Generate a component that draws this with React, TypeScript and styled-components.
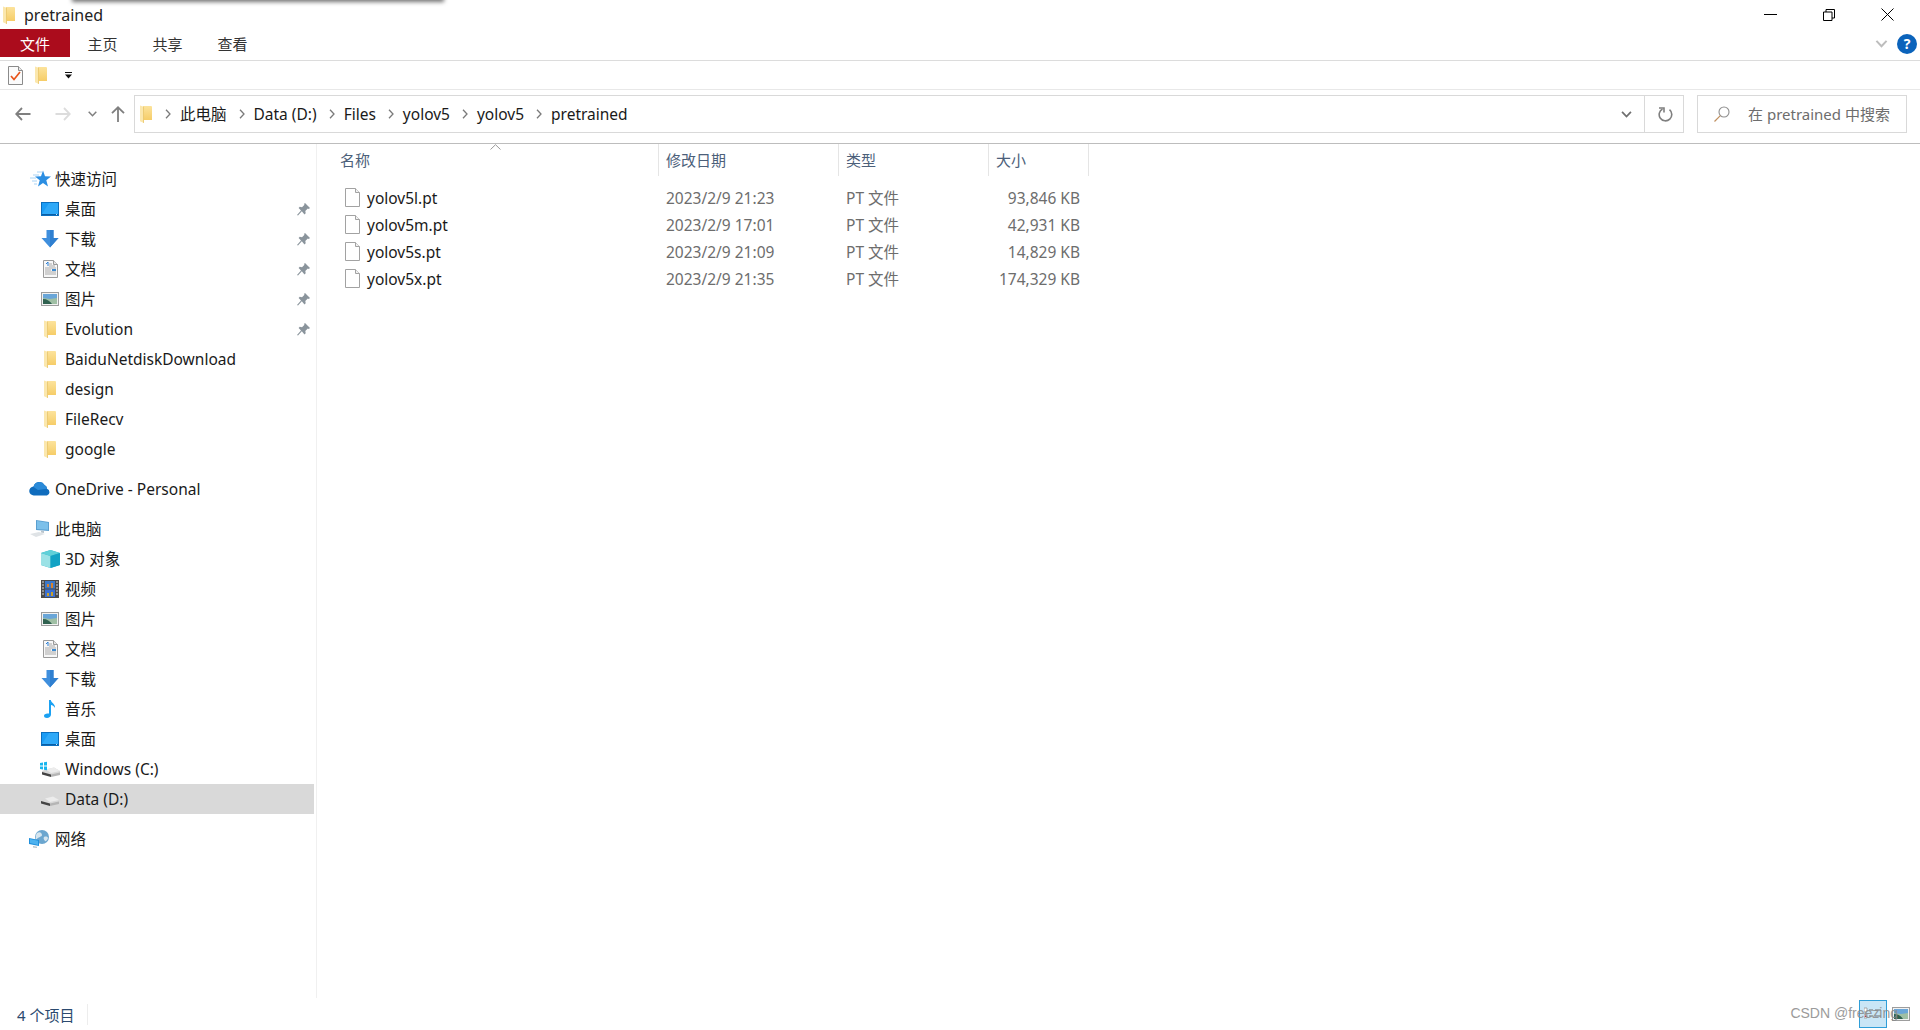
import styled, { createGlobalStyle, css } from "styled-components";

const GlobalStyle = createGlobalStyle`
  html, body {
    margin: 0;
    padding: 0;
    background: #fff;
  }
  * {
    box-sizing: border-box;
  }
`;

const FolderIcon = () => (
  <svg width="12" height="18" viewBox="0 0 12 18">
    <defs>
      <linearGradient id="folderBody" x1="0" y1="0" x2="0" y2="1">
        <stop offset="0" stopColor="#fce39c" />
        <stop offset="1" stopColor="#f6cd68" />
      </linearGradient>
    </defs>
    <path d="M3 1h8.500l.5.5V15H3z" fill="url(#folderBody)" />
    <path d="M0 .500l3.800 1.300V18L0 16.300z" fill="#fbe7ad" />
    <path d="M3.800 1.800V18L3 17.700V1.500z" fill="#e9c468" />
  </svg>
);

const DesktopIcon = () => (
  <svg width="18" height="14" viewBox="0 0 18 14">
    <rect x="0" y="0" width="18" height="14" fill="#0b6fbf" />
    <rect x="1" y="1" width="16" height="11" fill="#1a9cf5" />
    <path d="M1 12L8 1h9v11z" fill="#2fa9f8" />
    <rect x="1" y="12" width="16" height="1" fill="#0a5da3" />
    <rect x="15" y="12" width="1" height="1" fill="#cfe9fb" />
  </svg>
);

const DownloadIcon = () => (
  <svg width="18" height="18" viewBox="0 0 18 18">
    <path d="M5.500 0h7v8H17.500L9 17.500.5 8h5z" fill="#3f8fdd" />
    <path d="M9 0h3.500v8H17.500L9 17.500z" fill="#2f7fd0" />
  </svg>
);

const DocIcon = () => (
  <svg width="15" height="18" viewBox="0 0 15 18">
    <path d="M.5.500h10l4 4v13H.5z" fill="#f7f7f7" stroke="#9a9a9a" />
    <path d="M10.500.500v4h4" fill="#e4e4e4" stroke="#9a9a9a" />
    <path d="M3 4l2-2v4" stroke="#2a7fd5" fill="none" />
    <path d="M6 4h3M6 6h6M2 8h11M2 10h6M2 12h11M2 14h11" stroke="#a9a9a9" />
    <rect x="9" y="9" width="4" height="2" fill="#3d8bd0" />
  </svg>
);

const PictureIcon = () => (
  <svg width="18" height="14" viewBox="0 0 18 14">
    <rect x="0.500" y="0.500" width="17" height="13" fill="#f2f2f2" stroke="#9d9d9d" />
    <rect x="2" y="2" width="14" height="5" fill="#6aa6d8" />
    <path d="M2 6l7 1 7-1v6H2z" fill="#9fbfa4" />
    <path d="M2 7c4 0 7 2 9 5H2z" fill="#2f6150" />
  </svg>
);

const StarIcon = () => (
  <svg width="22" height="18" viewBox="0 0 22 18">
    <path d="M14 .5l2 5.800 6 .2-4.700 3.800L19 16.500l-5-3.500-5 3.500 1.700-6.200L6 6.500l6-.2z" fill="#2b8ee2" />
    <path d="M8 2h5M4 5h6M1 8h6M3 11h5M5 14h3" stroke="#a8d3f5" strokeWidth="1" />
  </svg>
);

const CloudIcon = () => (
  <svg width="22" height="14" viewBox="0 0 22 14">
    <path d="M5 13.500a4.500 4.500 0 0 1-.5-9A6 6 0 0 1 15.500 3 4 4 0 0 1 18 6.800 3.500 3.500 0 0 1 18 13.500z" fill="#0f6cbd" />
    <path d="M4.500 5A6 6 0 0 1 15.500 3 4 4 0 0 1 18 6.800L9 8z" fill="#2a8ad8" />
  </svg>
);

const ComputerIcon = () => (
  <svg width="22" height="18" viewBox="0 0 22 18">
    <path d="M7 0l13 2v9L7 10z" fill="#5a9fd0" />
    <path d="M8 1l11 1.700v7L8 9z" fill="#7cc0ea" />
    <path d="M12 10.500l3 .5v2l-3-.5z" fill="#b9c4cc" />
    <path d="M1 14l9-2 6 2-9 3z" fill="#dfe3e6" />
  </svg>
);

const CubeIcon = () => (
  <svg width="19" height="18" viewBox="0 0 19 18">
    <path d="M9.500 0L19 3v12l-9.500 3L0 15V3z" fill="#2fb3c6" />
    <path d="M0 3l9.500 3v12L0 15z" fill="#9be2e6" />
    <path d="M9.500 0L19 3 9.500 6 0 3z" fill="#5fd0d8" />
    <path d="M9.500 6L19 3v12l-9.500 3z" fill="#12a2c4" />
  </svg>
);

const VideoIcon = () => (
  <svg width="18" height="18" viewBox="0 0 18 18">
    <rect width="18" height="18" fill="#4a4a4a" />
    <rect x="4" y="1" width="10" height="7.500" fill="#3b78c9" />
    <rect x="4" y="9.500" width="10" height="7.500" fill="#3b6fd0" />
    <path d="M6 7V4h2v3zM10 8V3h2v5z" fill="#d9822b" />
    <path d="M6 16v-3h2v3zM10 16v-4h2v4z" fill="#c8a02b" />
    <path d="M1 2h2M1 5h2M1 8h2M1 11h2M1 14h2M15 2h2M15 5h2M15 8h2M15 11h2M15 14h2" stroke="#d8d8d8" />
  </svg>
);

const MusicIcon = () => (
  <svg width="14" height="18" viewBox="0 0 14 18">
    <path d="M6 0h1.800c.4 3 4.700 3.800 4.200 8-.9-1.800-2.400-2.700-4-3v9.500c0 2-2 3.500-4 3.500-1.800 0-3-1-3-2.300C1 14 3.500 13 6 13.600z" fill="#1ba1f2" />
  </svg>
);

const DriveBody = () => (
  <>
    <path d="M4 7.500l8-2 6 3.500v3l-9 2-9-2.500V9z" fill="#d8d8d8" />
    <path d="M0 10l9 2.500V15l-9-2.500z" fill="#444" />
    <path d="M9 12.500l9-2V13l-9 2z" fill="#b5b5b5" />
    <path d="M4 7.500l8-2 6 3.500-9 2z" fill="#ececec" />
  </>
);

const WinDriveIcon = () => (
  <svg width="20" height="16" viewBox="0 0 20 16">
    <g transform="translate(2 1)">
      <DriveBody />
    </g>
    <path d="M0 2l3-.5v3H0zM4 1.300l3-.5v3.700H4zM0 5.500h3v3l-3-.5zM4 5.500h3v3.700l-3-.5z" fill="#19b5ee" />
  </svg>
);

const DataDriveIcon = () => (
  <svg width="20" height="16" viewBox="0 0 20 16">
    <g transform="translate(1 0)">
      <DriveBody />
    </g>
  </svg>
);

const NetworkIcon = () => (
  <svg width="22" height="19" viewBox="0 0 22 19">
    <circle cx="13" cy="7" r="7" fill="#6ba6cf" />
    <path d="M8 3c3-2 5 0 5 2s-4 2-5 4-2-3 0-6zM15 7c2-1 4 0 4 1s-2 4-3 3-2-3-1-4z" fill="#d5e5ef" />
    <path d="M0 8l10 2v6L0 14z" fill="#1f8fdc" />
    <path d="M1 9l8 1.700v4.200L1 13z" fill="#4db2ef" />
    <path d="M4 16l4 .8v1.200l-4-.5z" fill="#b8c3ca" />
  </svg>
);

const PinIcon = () => (
  <svg width="13" height="13" viewBox="0 0 13 13">
    <path d="M8 0l5 5-1.200 1-1-.4L8.300 8l.4 2.200L7.500 11.400 4.800 8.200 1 12.500 0 12l4-4.500L1.600 5l1.200-1.200 2.200.4 2.500-2.400L7 1z" fill="#8a949c" />
  </svg>
);

const FileIcon = () => (
  <svg width="15" height="19" viewBox="0 0 15 19">
    <path d="M.5.500h10l4 4v14H.5z" fill="#fff" stroke="#a2a2a2" />
    <path d="M10.500.500v4h4" fill="#f1f1f1" stroke="#a2a2a2" />
  </svg>
);

const TaskIcon = () => (
  <svg width="15" height="19" viewBox="0 0 15 19">
    <path d="M.5.500h10l4 4v14H.5z" fill="#fbfbfb" stroke="#8b8b8b" />
    <path d="M10.500.500v4h4" fill="#e8e8e8" stroke="#8b8b8b" />
    <path d="M3 10l3 3.500L12 6" fill="none" stroke="#e8541a" strokeWidth="1.700" />
  </svg>
);

const BackIcon = ({ color }: { color: string }) => (
  <svg width="16" height="14" viewBox="0 0 16 14">
    <path d="M15.500 7H1.500M7 1L1.200 7 7 13" fill="none" stroke={color} strokeWidth="1.800" />
  </svg>
);

const ForwardIcon = ({ color }: { color: string }) => (
  <svg width="16" height="14" viewBox="0 0 16 14">
    <path d="M.5 7h14M9 1l5.800 6L9 13" fill="none" stroke={color} strokeWidth="1.800" />
  </svg>
);

const UpIcon = () => (
  <svg width="14" height="16" viewBox="0 0 14 16">
    <path d="M7 16V1.500M1 7.200L7 1.300l6 5.900" fill="none" stroke="#7f7f7f" strokeWidth="1.800" />
  </svg>
);

const SmallChevron = ({ color = "#7f7f7f", w = 9, h = 6 }: { color?: string; w?: number; h?: number }) => (
  <svg width={w} height={h} viewBox="0 0 9 6">
    <path d="M.7.700L4.500 4.700 8.300.7" fill="none" stroke={color} strokeWidth="1.500" />
  </svg>
);

const CrumbChevron = () => (
  <svg width="6" height="10" viewBox="0 0 6 10">
    <path d="M1 .8L5 5 1 9.200" fill="none" stroke="#7a7a7a" strokeWidth="1.300" />
  </svg>
);

const RefreshIcon = () => (
  <svg width="15" height="15" viewBox="0 0 15 15">
    <path d="M4.500 2A6.300 6.300 0 1 0 11.500 2.700" fill="none" stroke="#7f7f7f" strokeWidth="1.600" />
    <path d="M1 1h5v4.500" fill="none" stroke="#7f7f7f" strokeWidth="1.600" />
  </svg>
);

const SearchIcon = () => (
  <svg width="16" height="16" viewBox="0 0 16 16">
    <circle cx="10" cy="6" r="5" fill="none" stroke="#8f8f8f" strokeWidth="1.100" />
    <path d="M6.300 9.700L.5 15.500" stroke="#c09060" strokeWidth="1.200" />
  </svg>
);

const DetailsViewIcon = () => (
  <svg width="18" height="20" viewBox="0 0 18 20">
    <path d="M0 4h3v4H0zM0 10h3v4H0z" fill="#fff" stroke="#8a8a8a" strokeWidth="0.700" />
    <rect x="0.800" y="11.500" width="1.500" height="1.500" fill="#b01818" />
    <path d="M5 6h4M11 6h6M5 12h4M11 12h6" stroke="#6f6f6f" />
  </svg>
);

const iconFor = {
  star: <StarIcon />,
  desktop: <DesktopIcon />,
  download: <DownloadIcon />,
  doc: <DocIcon />,
  picture: <PictureIcon />,
  folder: <FolderIcon />,
  cloud: <CloudIcon />,
  computer: <ComputerIcon />,
  cube: <CubeIcon />,
  video: <VideoIcon />,
  music: <MusicIcon />,
  win: <WinDriveIcon />,
  drive: <DataDriveIcon />,
  network: <NetworkIcon />,
};

type NavItem = {
  label: string;
  icon: keyof typeof iconFor;
  top?: boolean;
  pinned?: boolean;
  selected?: boolean;
};

const navGroups: NavItem[][] = [
  [
    { label: "快速访问", icon: "star", top: true },
    { label: "桌面", icon: "desktop", pinned: true },
    { label: "下载", icon: "download", pinned: true },
    { label: "文档", icon: "doc", pinned: true },
    { label: "图片", icon: "picture", pinned: true },
    { label: "Evolution", icon: "folder", pinned: true },
    { label: "BaiduNetdiskDownload", icon: "folder" },
    { label: "design", icon: "folder" },
    { label: "FileRecv", icon: "folder" },
    { label: "google", icon: "folder" },
  ],
  [{ label: "OneDrive - Personal", icon: "cloud", top: true }],
  [
    { label: "此电脑", icon: "computer", top: true },
    { label: "3D 对象", icon: "cube" },
    { label: "视频", icon: "video" },
    { label: "图片", icon: "picture" },
    { label: "文档", icon: "doc" },
    { label: "下载", icon: "download" },
    { label: "音乐", icon: "music" },
    { label: "桌面", icon: "desktop" },
    { label: "Windows (C:)", icon: "win" },
    { label: "Data (D:)", icon: "drive", selected: true },
  ],
  [{ label: "网络", icon: "network", top: true }],
];

const crumbs = ["此电脑", "Data (D:)", "Files", "yolov5", "yolov5", "pretrained"];

const files = [
  { name: "yolov5l.pt", date: "2023/2/9 21:23", size: "93,846 KB" },
  { name: "yolov5m.pt", date: "2023/2/9 17:01", size: "42,931 KB" },
  { name: "yolov5s.pt", date: "2023/2/9 21:09", size: "14,829 KB" },
  { name: "yolov5x.pt", date: "2023/2/9 21:35", size: "174,329 KB" },
];

const App = () => {
  return (
    <Page>
      <GlobalStyle />
      <TopShadow />
      <TitleBar>
        <FolderIcon />
        <TitleText>pretrained</TitleText>
        <WindowButtons>
          <WindowButton>
            <svg width="13" height="1" viewBox="0 0 13 1">
              <rect width="13" height="1" fill="#000" />
            </svg>
          </WindowButton>
          <WindowButton>
            <svg width="12" height="12" viewBox="0 0 12 12">
              <path d="M.5 3h8.500v8.500H.5zM3 3V.5h8.500V9H9" fill="none" stroke="#000" />
            </svg>
          </WindowButton>
          <WindowButton>
            <svg width="13" height="13" viewBox="0 0 13 13">
              <path d="M.5.500l12 12M12.500.500l-12 12" stroke="#000" />
            </svg>
          </WindowButton>
        </WindowButtons>
      </TitleBar>

      <RibbonTabs>
        <FileTab>文件</FileTab>
        <RibbonTab>主页</RibbonTab>
        <RibbonTab>共享</RibbonTab>
        <RibbonTab>查看</RibbonTab>
        <RibbonRight>
          <SmallChevron color="#bdbdbd" w={13} h={8} />
          <HelpBadge>?</HelpBadge>
        </RibbonRight>
      </RibbonTabs>

      <QuickBar>
        <TaskIcon />
        <FolderIcon />
        <QuickDrop>
          <svg width="7" height="7" viewBox="0 0 7 7">
            <path d="M0 0h7v1H0zM0 2.500h7L3.500 6.500z" fill="#111" />
          </svg>
        </QuickDrop>
      </QuickBar>

      <NavBar>
        <NavButton $w={40}>
          <BackIcon color="#7f7f7f" />
        </NavButton>
        <NavButton $w={40}>
          <ForwardIcon color="#dcdcdc" />
        </NavButton>
        <NavButton $w={18}>
          <SmallChevron />
        </NavButton>
        <NavButton $w={33}>
          <UpIcon />
        </NavButton>
        <AddressBox>
          <FolderIcon />
          <Crumbs>
            {crumbs.map((crumb, i) => (
              <Crumb key={i}>
                <CrumbChevron />
                <span>{crumb}</span>
              </Crumb>
            ))}
          </Crumbs>
          <AddressDrop>
            <SmallChevron color="#6f6f6f" w={11} h={7} />
          </AddressDrop>
          <RefreshBox>
            <RefreshIcon />
          </RefreshBox>
        </AddressBox>
        <SearchBox>
          <SearchIcon />
          <SearchText>在 pretrained 中搜索</SearchText>
        </SearchBox>
      </NavBar>

      <Body>
        <Sidebar>
          {navGroups.map((group, g) => (
            <NavGroup key={g}>
              {group.map((item) => (
                <NavRow key={item.label + item.icon} $top={item.top} $selected={item.selected}>
                  <NavIcon $top={item.top}>{iconFor[item.icon]}</NavIcon>
                  <NavLabel>{item.label}</NavLabel>
                  {item.pinned && (
                    <PinSlot>
                      <PinIcon />
                    </PinSlot>
                  )}
                </NavRow>
              ))}
            </NavGroup>
          ))}
        </Sidebar>

        <FilePane>
          <HeaderRow>
            <HeaderCell $pad={23}>名称</HeaderCell>
            <HeaderCell $pad={7}>修改日期</HeaderCell>
            <HeaderCell $pad={7}>类型</HeaderCell>
            <HeaderCell $pad={7}>大小</HeaderCell>
            <SortMark>
              <svg width="11" height="6" viewBox="0 0 11 6">
                <path d="M.5 5.500L5.500.7l5 4.800" fill="none" stroke="#9a9a9a" />
              </svg>
            </SortMark>
          </HeaderRow>
          <FileList>
            {files.map((file) => (
              <FileRow key={file.name}>
                <NameCell>
                  <FileIcon />
                  <span>{file.name}</span>
                </NameCell>
                <MetaCell $pad={7}>{file.date}</MetaCell>
                <MetaCell $pad={7}>PT 文件</MetaCell>
                <SizeCell>{file.size}</SizeCell>
              </FileRow>
            ))}
          </FileList>
        </FilePane>
      </Body>

      <StatusBar>
        <StatusCount>4 个项目</StatusCount>
        <ViewButtons>
          <ActiveView>
            <DetailsViewIcon />
          </ActiveView>
          <PictureIcon />
        </ViewButtons>
      </StatusBar>
      <Watermark>CSDN @freezing</Watermark>
    </Page>
  );
};

export default App;

const uiFont = `"Noto Sans", "Noto Sans CJK SC", sans-serif`;

const fileColumns = css`
  display: grid;
  grid-template-columns: 342px 180px 150px 100px;
`;

const Page = styled.div`
  position: relative;
  width: 1920px;
  height: 1030px;
  overflow: hidden;
  display: flex;
  flex-direction: column;
  background: #fff;
  font-family: ${uiFont};
  font-size: 15.5px;
  line-height: 20px;
  color: #1a1a1a;
`;

const TopShadow = styled.div`
  position: absolute;
  left: 72px;
  top: -10px;
  width: 372px;
  height: 10px;
  box-shadow: 0 2px 4px rgba(0, 0, 0, 0.55);
`;

const TitleBar = styled.div`
  height: 29px;
  flex: none;
  display: flex;
  align-items: center;
  padding: 0 3px;
`;

const TitleText = styled.span`
  margin-left: 9px;
  font-size: 16px;
  color: #222;
`;

const WindowButtons = styled.div`
  margin-left: auto;
  display: flex;
`;

const WindowButton = styled.div`
  width: 58.5px;
  height: 29px;
  display: flex;
  align-items: center;
  justify-content: center;
`;

const RibbonTabs = styled.div`
  height: 32px;
  flex: none;
  display: flex;
  align-items: flex-start;
  border-bottom: 1px solid #dcdcdc;
`;

const FileTab = styled.div`
  width: 70px;
  height: 28px;
  display: flex;
  align-items: center;
  justify-content: center;
  padding-top: 1px;
  background: #ab0c1c;
  color: #fff;
  font-size: 15px;
`;

const RibbonTab = styled.div`
  width: 65px;
  height: 28px;
  display: flex;
  align-items: center;
  justify-content: center;
  padding-top: 2px;
  color: #333;
  font-size: 15px;
`;

const RibbonRight = styled.div`
  margin-left: auto;
  height: 30px;
  display: flex;
  align-items: center;
  gap: 9px;
  padding-right: 3px;
`;

const HelpBadge = styled.div`
  width: 20px;
  height: 20px;
  border-radius: 50%;
  background: #0b63bb;
  color: #fff;
  display: flex;
  align-items: center;
  justify-content: center;
  font-size: 14px;
  font-weight: 700;
`;

const QuickBar = styled.div`
  height: 29px;
  flex: none;
  display: flex;
  align-items: center;
  gap: 12px;
  padding-left: 8px;
  border-bottom: 1px solid #e8e8e8;
`;

const QuickDrop = styled.div`
  display: flex;
  margin-left: 6px;
`;

const NavBar = styled.div`
  height: 54px;
  flex: none;
  display: flex;
  align-items: flex-start;
  padding: 5px 13px 0 3px;
  border-bottom: 1px solid #bdbdbd;
`;

const NavButton = styled.div<{ $w: number }>`
  width: ${(p) => p.$w}px;
  height: 38px;
  display: flex;
  align-items: center;
  justify-content: center;
`;

const AddressBox = styled.div`
  width: 1550px;
  height: 38px;
  display: flex;
  align-items: center;
  padding-left: 5px;
  border: 1px solid #d9d9d9;
`;

const Crumbs = styled.div`
  display: flex;
  align-items: center;
  gap: 12px;
  margin-left: 13px;
`;

const Crumb = styled.div`
  display: flex;
  align-items: center;
  gap: 9px;
`;

const AddressDrop = styled.div`
  margin-left: auto;
  width: 36px;
  display: flex;
  justify-content: center;
`;

const RefreshBox = styled.div`
  width: 39px;
  height: 36px;
  display: flex;
  align-items: center;
  justify-content: center;
  padding-left: 3px;
  border-left: 1px solid #d9d9d9;
`;

const SearchBox = styled.div`
  width: 210px;
  height: 38px;
  margin-left: 13px;
  display: flex;
  align-items: center;
  padding-left: 16px;
  border: 1px solid #d9d9d9;
`;

const SearchText = styled.span`
  margin-left: 18px;
  color: #6d6d6d;
  white-space: nowrap;
  font-size: 15px;
`;

const Body = styled.div`
  flex: 1;
  min-height: 0;
  display: flex;
`;

const Sidebar = styled.div`
  width: 317px;
  flex: none;
  padding: 20px 2px 0 0;
  border-right: 1px solid #f0f0f0;
  display: flex;
  flex-direction: column;
  gap: 10px;
`;

const NavGroup = styled.div`
  display: flex;
  flex-direction: column;
`;

const NavRow = styled.div<{ $top?: boolean; $selected?: boolean }>`
  height: 30px;
  display: flex;
  align-items: center;
  padding-left: ${(p) => (p.$top ? 29 : 40)}px;
  background: ${(p) => (p.$selected ? "#d9d9d9" : "transparent")};
`;

const NavIcon = styled.div<{ $top?: boolean }>`
  width: ${(p) => (p.$top ? 22 : 20)}px;
  margin-right: ${(p) => (p.$top ? 4 : 5)}px;
  display: flex;
  align-items: center;
  justify-content: center;
`;

const NavLabel = styled.span`
  color: #1a1a1a;
  white-space: nowrap;
`;

const PinSlot = styled.div`
  margin-left: auto;
  padding-right: 4px;
  display: flex;
`;

const FilePane = styled.div`
  flex: 1;
  min-width: 0;
`;

const HeaderRow = styled.div`
  ${fileColumns}
  position: relative;
  height: 32px;
  width: fit-content;
`;

const HeaderCell = styled.div<{ $pad: number }>`
  display: flex;
  align-items: center;
  padding-left: ${(p) => p.$pad}px;
  border-right: 1px solid #e5e5e5;
  color: #4c607a;
  font-size: 15px;
`;

const SortMark = styled.div`
  position: absolute;
  left: 173px;
  top: 0;
  display: flex;
`;

const FileList = styled.div`
  margin-top: 8px;
`;

const FileRow = styled.div`
  ${fileColumns}
  height: 27px;
  align-items: center;
`;

const NameCell = styled.div`
  display: flex;
  align-items: center;
  gap: 7px;
  padding-left: 28px;
  color: #1a1a1a;
`;

const MetaCell = styled.div<{ $pad: number }>`
  padding-left: ${(p) => p.$pad}px;
  color: #6d6d6d;
  font-size: 15.5px;
`;

const SizeCell = styled.div`
  padding-right: 9px;
  text-align: right;
  color: #6d6d6d;
  font-size: 15.5px;
`;

const StatusBar = styled.div`
  height: 32px;
  flex: none;
  display: flex;
  align-items: center;
  padding-left: 17px;
  padding-right: 10px;
`;

const StatusCount = styled.div`
  width: 71px;
  padding-top: 1px;
  border-right: 1px solid #ededed;
  color: #2b4a6f;
  font-size: 15px;
`;

const ViewButtons = styled.div`
  margin-left: auto;
  display: flex;
  align-items: center;
  gap: 5px;
`;

const ActiveView = styled.div`
  width: 28px;
  height: 28px;
  display: flex;
  align-items: center;
  justify-content: center;
  background: #c9e6f6;
  border: 1px solid #2f9ed8;
`;

const Watermark = styled.div`
  position: absolute;
  right: 22px;
  bottom: 7px;
  font-family: "Liberation Sans", sans-serif;
  font-size: 14px;
  color: #8a8a8a;
  opacity: 0.85;
`;
